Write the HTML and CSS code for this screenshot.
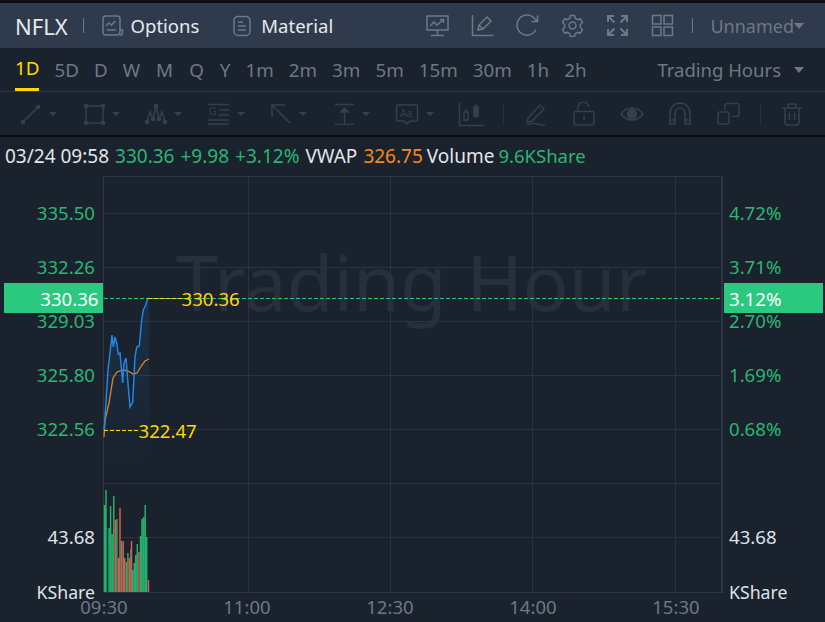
FILE: index.html
```html
<!DOCTYPE html>
<html>
<head>
    <title>NFLX</title>
    <link rel="stylesheet" href="styles.css">
</head>
<body>
    <div class="app">
        <div class="header">
            <span class="symbol">NFLX</span>
            <span class="sep"></span>
            <div class="nav-item nav-options">
                <svg class="icon" width="22" height="22" viewBox="0 0 22 22"><rect x="1" y="1" width="17" height="19" rx="3"/><path d="M4 11l3-3 2.500 2 4-4M5 15h9M18 15h2.500v3a2 2 0 0 1-2.500 2"/></svg>
                <span>Options</span>
            </div>
            <div class="nav-item nav-material">
                <svg class="icon" width="18" height="22" viewBox="0 0 18 22"><rect x="1" y="1.500" width="16" height="19" rx="4"/><path d="M5 7h5M5 11h8M5 15h8"/></svg>
                <span>Material</span>
            </div>
            <div class="header-right">
                <svg class="icon" width="23" height="23" viewBox="0 0 23 23"><rect x="1" y="2" width="21" height="14"/><path d="M4 12l4-4 3 3 6-5M14 5.500h3.500V9M11.500 16v5M5 21.500h13"/></svg>
                <svg class="icon" width="23" height="23" viewBox="0 0 23 23"><path d="M1.500 1v20.500H22.500M7 16l1-5 8-8 4 4-8 8zM8 11l4 4"/></svg>
                <svg class="icon" width="23" height="23" viewBox="0 0 23 23"><path d="M20 15.500A10 10 0 1 1 18.500 4.500L21 7M21.500 1.500V7.500H15.500"/></svg>
                <svg class="icon" width="23" height="23" viewBox="0 0 23 23"><circle cx="11.500" cy="11.500" r="3.500"/><path d="M9.500 1.500h4l.8 2.800 2.300 1.300 2.800-.7 2 3.600-2 2.100v2.800l2 2.100-2 3.600-2.800-.7-2.300 1.300-.8 2.800h-4l-.8-2.800-2.300-1.300-2.800.7-2-3.600 2-2.100V10.600l-2-2.100 2-3.600 2.800.7 2.300-1.300z"/></svg>
                <svg class="icon icon-bold" width="23" height="23" viewBox="0 0 23 23"><path d="M2 8V2h6M2 2l6.500 6.500M21 8V2h-6M21 2l-6.500 6.500M2 15v6h6M2 21l6.500-6.500M21 15v6h-6M21 21l-6.500-6.500"/></svg>
                <svg class="icon" width="23" height="23" viewBox="0 0 23 23"><rect x="1.500" y="1.500" width="8.500" height="8.500"/><rect x="13" y="1.500" width="8.500" height="8.500"/><rect x="1.500" y="13" width="8.500" height="8.500"/><rect x="13" y="13" width="8.500" height="8.500"/></svg>
                <span class="sep sep-right"></span>
                <span class="unnamed">Unnamed</span>
                <span class="caret caret-header"></span>
            </div>
        </div>

        <div class="tabs">
            <span class="tab active">1D</span>
            <span class="tab">5D</span>
            <span class="tab">D</span>
            <span class="tab tab-wide">W</span>
            <span class="tab tab-wide">M</span>
            <span class="tab tab-wide">Q</span>
            <span class="tab">Y</span>
            <span class="tab">1m</span>
            <span class="tab">2m</span>
            <span class="tab">3m</span>
            <span class="tab">5m</span>
            <span class="tab">15m</span>
            <span class="tab">30m</span>
            <span class="tab">1h</span>
            <span class="tab">2h</span>
            <div class="hours">
                <span>Trading Hours</span>
                <span class="caret"></span>
            </div>
        </div>

        <div class="toolbar">
            <div class="tool tool-caret">
                <svg class="icon" width="22" height="22" viewBox="0 0 22 22"><path d="M3 19L18 4"/><circle class="dot" cx="3" cy="19" r="1.500"/><circle class="dot" cx="18" cy="4" r="1.500"/></svg>
                <span class="caret"></span>
            </div>
            <div class="tool tool-caret">
                <svg class="icon" width="22" height="22" viewBox="0 0 22 22"><rect x="3" y="3" width="17" height="17"/><circle class="dot" cx="3" cy="3" r="1.500"/><circle class="dot" cx="20" cy="3" r="1.500"/><circle class="dot" cx="3" cy="20" r="1.500"/><circle class="dot" cx="20" cy="20" r="1.500"/></svg>
                <span class="caret"></span>
            </div>
            <div class="tool tool-caret">
                <svg class="icon" width="22" height="22" viewBox="0 0 22 22"><path d="M2 19L5 9l3 7 3-13 3 13 3-7 3 10"/><circle class="dot" cx="2" cy="19" r="1.500"/><circle class="dot" cx="8" cy="16" r="1.500"/><circle class="dot" cx="11" cy="3" r="1.500"/><circle class="dot" cx="14" cy="16" r="1.500"/><circle class="dot" cx="20" cy="19" r="1.500"/></svg>
                <span class="caret"></span>
            </div>
            <div class="tool tool-caret">
                <svg class="icon" width="22" height="22" viewBox="0 0 22 22"><path d="M0 1.500h21M11 7h10M11 12h10M0 17h21M0 21h21"/><text class="tool-letter" x="1" y="12">G</text></svg>
                <span class="caret"></span>
            </div>
            <div class="tool tool-caret">
                <svg class="icon" width="22" height="22" viewBox="0 0 22 22"><path d="M2 14V2h13M2 2l18 18"/></svg>
                <span class="caret"></span>
            </div>
            <div class="tool tool-caret">
                <svg class="icon" width="22" height="22" viewBox="0 0 22 22"><path d="M2 1.500h19M2 21.500h19M11.500 8v13"/><path class="dot" d="M7.500 9l4-4 4 4z"/></svg>
                <span class="caret"></span>
            </div>
            <div class="tool tool-caret">
                <svg class="icon" width="24" height="22" viewBox="0 0 24 22"><path d="M3 2h18a1.500 1.500 0 0 1 1.500 1.500v13a1.500 1.500 0 0 1-1.500 1.500h-6l-3 3-3-3H3a1.500 1.500 0 0 1-1.500-1.500v-13A1.500 1.500 0 0 1 3 2z"/><text class="tool-letter" x="5" y="14">Aa</text></svg>
                <span class="caret"></span>
            </div>
            <div class="tool tool-candles">
                <svg class="icon" width="26" height="26" viewBox="0 0 26 26"><path d="M1.500 1v23.500H26M8 8v3M8 21v-3M18 3v3M18 17v-3"/><rect x="6" y="11" width="4" height="8"/><rect class="dot" x="16" y="6" width="4" height="9"/></svg>
            </div>
            <span class="tool-sep tool-sep-a"></span>
            <div class="tool tool-draw">
                <svg class="icon" width="22" height="24" viewBox="0 0 22 24"><path d="M3 16L15 3l4 4L7 19l-5 1zM2 23c4-3 7-2 10-1s5 1 8 1"/></svg>
            </div>
            <div class="tool tool-lock">
                <svg class="icon" width="22" height="24" viewBox="0 0 22 24"><rect x="1" y="9.500" width="20" height="13.500" rx="2"/><path d="M5 9.500V6a5.500 5.500 0 0 1 11-1M11 14v4"/></svg>
            </div>
            <div class="tool tool-eye">
                <svg class="icon" width="24" height="22" viewBox="0 0 24 22"><path d="M1 11c6-8 16-8 22 0-6 8-16 8-22 0z"/><circle class="dot" cx="12" cy="11" r="4.500"/></svg>
            </div>
            <div class="tool tool-magnet">
                <svg class="icon" width="22" height="24" viewBox="0 0 22 24"><path d="M1 22V11a10 10 0 0 1 20 0v11h-5V11a5 5 0 0 0-10 0v11zM1 18h5M16 18h5"/></svg>
            </div>
            <div class="tool tool-copy">
                <svg class="icon" width="24" height="24" viewBox="0 0 24 24"><path d="M9 8V3a1.500 1.500 0 0 1 1.500-1.500h11A1.500 1.500 0 0 1 23 3v10a1.500 1.500 0 0 1-1.500 1.500H16"/><rect x="2" y="10" width="11" height="12" rx="2"/></svg>
            </div>
            <span class="tool-sep tool-sep-b"></span>
            <div class="tool">
                <svg class="icon" width="22" height="24" viewBox="0 0 22 24"><path d="M1 6h20M7 6V2h8v4M4 6v14a3 3 0 0 0 3 3h8a3 3 0 0 0 3-3V6M8.500 11v7M13.500 11v7"/></svg>
            </div>
        </div>

        <div class="info">
            <span>03/24 09:58</span>
            <span class="up">330.36</span>
            <span class="up">+9.98</span>
            <span class="up">+3.12%</span>
            <span>VWAP</span>
            <span class="avg">326.75</span>
            <span class="info-volume">Volume</span>
            <span class="up info-total">9.6KShare</span>
        </div>

        <svg class="chart" width="825" height="446" viewBox="0 176 825 446">
            <defs>
                <linearGradient id="area" x1="0" y1="0" x2="0" y2="1">
                    <stop offset="0" stop-color="#1d6fb8" stop-opacity="0.2"/>
                    <stop offset="1" stop-color="#1d6fb8" stop-opacity="0"/>
                </linearGradient>
            </defs>

            <text class="watermark" x="411.500" y="311">Trading Hour</text>

            <path class="grid" d="M103 213.500H722M103 267.500H722M103 321.500H722M103 375.500H722M103 429.500H722M103 483.500H722M103 537.500H722"/>
            <path class="grid" d="M248.500 176V592M390.500 176V592M532.500 176V592M675.500 176V592"/>
            <path class="frame" d="M103.500 176.500H722M103.500 176V592M103 592.500H722"/>
            <path class="frame-right" d="M722 176V593"/>

            <path class="area" fill="url(#area)" d="M104 430L105 417 108 370 110 353 112 335 113.300 347 115 337 116.700 343 118.300 354 120 353 122.700 383 124 363 126 358 128.300 387 130 407 132.700 402 135 357 136.700 347 139.300 346 141.700 320 143.300 310 145.700 305 147.700 298.500 149 298.500V465H104Z"/>

            <g class="vol-up">
                <path d="M104.500 592V505M106 592V490M109 592V528M110.600 592V506M112.200 592V534M113.800 592V496M116.900 592V519M121.600 592V541M126.300 592V562M127.900 592V553M131 592V549M132.600 592V570M134.200 592V563M135.700 592V555M137.300 592V544M140.500 592V536M142 592V519M143.600 592V517M145.200 592V505M146.700 592V537"/>
            </g>
            <g class="vol-down">
                <path d="M115.300 592V520M118.500 592V558M120 592V508M123.200 592V541M124.700 592V558M129.500 592V558M131.500 592V541M139 592V552M148.500 592V580"/>
            </g>

            <polyline class="line-avg" points="104,437 105,420 109,403 113,378 117,372 123,370 128,371 133,374 137,373 142,365 145,361 149,359"/>
            <polyline class="line-price" points="104,430 105,417 108,370 110,353 112,335 113.300,347 115,337 116.700,343 118.300,354 120,353 122.700,383 124,363 126,358 128.300,387 130,407 132.700,402 135,357 136.700,347 139.300,346 141.700,320 143.300,310 145.700,305 147.700,298.500 149,298.500"/>

            <path class="last-line" d="M104 298.500H722"/>
            <path class="mark-line" d="M148 298.500H182M104 430.500H138"/>
            <text class="mark" x="181.500" y="306">330.36</text>
            <text class="mark" x="138.500" y="438">322.47</text>

            <text class="axis up-text end" x="95" y="220">335.50</text>
            <text class="axis up-text end" x="95" y="274">332.26</text>
            <text class="axis up-text end" x="95" y="328">329.03</text>
            <text class="axis up-text end" x="95" y="382">325.80</text>
            <text class="axis up-text end" x="95" y="436">322.56</text>
            <text class="axis light end" x="95" y="544">43.68</text>
            <text class="axis light unit end" x="95" y="599">KShare</text>

            <text class="axis up-text" x="729" y="220">4.72%</text>
            <text class="axis up-text" x="729" y="274">3.71%</text>
            <text class="axis up-text" x="729" y="328">2.70%</text>
            <text class="axis up-text" x="729" y="382">1.69%</text>
            <text class="axis up-text" x="729" y="436">0.68%</text>
            <text class="axis light" x="729" y="544">43.68</text>
            <text class="axis light unit" x="729" y="599">KShare</text>

            <rect class="last-box" x="4" y="283" width="99" height="30"/>
            <rect class="last-box" x="724" y="283" width="99" height="30"/>
            <text class="axis white end" x="98.500" y="306">330.36</text>
            <text class="axis white" x="729" y="306">3.12%</text>

            <text class="axis time mid" x="104" y="614">09:30</text>
            <text class="axis time mid" x="247" y="614">11:00</text>
            <text class="axis time mid" x="390" y="614">12:30</text>
            <text class="axis time mid" x="533" y="614">14:00</text>
            <text class="axis time mid" x="676" y="614">15:30</text>
        </svg>
    </div>
</body>
</html>
```

FILE: styles.css
```css
body {
    margin: 0;
    background-color: #1a222d;
    font-family: "Noto Sans", "Open Sans", sans-serif;
}

.app {
    width: 825px;
    height: 622px;
    overflow: hidden;
    border-top: 3px solid #0c0e12;
    box-sizing: border-box;
}

.icon {
    fill: none;
    stroke: #6d7887;
    stroke-width: 1.5;
    flex-shrink: 0;
}

.icon-bold {
    stroke-width: 2;
}

.header {
    height: 45px;
    background-color: #2f3b4c;
    display: flex;
    align-items: center;
    padding-left: 15px;
    color: #e6e9ee;
}

.symbol {
    font-size: 22px;
}

.sep {
    width: 1px;
    height: 15px;
    background-color: #6d7887;
    margin: 0 18px 0 15px;
}

.nav-item {
    display: flex;
    align-items: center;
    font-size: 18.500px;
}

.nav-options {
    gap: 7px;
}

.nav-material {
    gap: 10px;
    margin-left: 34px;
}

.header-right {
    margin-left: auto;
    display: flex;
    align-items: center;
    gap: 22px;
    padding-right: 21px;
}

.sep-right {
    margin: 0 -5px 0 -4px;
}

.unnamed {
    color: #6d7887;
    font-size: 18px;
}

.caret {
    width: 0;
    height: 0;
    border-left: 5px solid transparent;
    border-right: 5px solid transparent;
    border-top: 6px solid #6d7887;
}

.caret-header {
    margin-left: -22px;
}

.tabs {
    height: 43px;
    border-bottom: 1px solid #2f3945;
    display: flex;
    align-items: center;
    gap: 15px;
    padding-left: 15px;
    padding-right: 21px;
    font-size: 18.800px;
    color: #6d7887;
}

.tab-wide {
    margin-right: 1px;
}

.tab.active {
    color: #ffd800;
    height: 43px;
    line-height: 41px;
    box-sizing: border-box;
    border-bottom: 3px solid #ffd800;
}

.hours {
    margin-left: auto;
    display: flex;
    align-items: center;
    gap: 13px;
    font-size: 18.500px;
}

.toolbar {
    height: 43px;
    border-bottom: 2px solid #0c0e12;
    display: flex;
    align-items: center;
    padding-left: 20px;
}

.toolbar .icon {
    stroke: #363f4c;
}

.toolbar .caret {
    border-top-color: #363f4c;
    border-left-width: 4px;
    border-right-width: 4px;
    border-top-width: 4px;
}

.dot {
    fill: #363f4c;
}

.tool-letter {
    fill: #363f4c;
    stroke: none;
    font-size: 10px;
    font-family: "Liberation Sans", sans-serif;
}

.tool {
    display: flex;
    align-items: center;
}

.tool-caret {
    width: 62.500px;
    gap: 7px;
}

.tool-candles {
    width: 45.500px;
}

.tool-sep {
    width: 1px;
    height: 22px;
    background-color: #252e3a;
}

.tool-sep-a {
    margin-right: 21px;
}

.tool-sep-b {
    margin-right: 20px;
}

.tool-draw {
    margin-right: 26px;
}

.tool-lock,
.tool-eye,
.tool-magnet {
    margin-right: 25px;
}

.tool-copy {
    margin-right: 20px;
}

.info {
    height: 39px;
    box-sizing: border-box;
    padding-bottom: 2px;
    display: flex;
    align-items: center;
    gap: 6px;
    padding-left: 5px;
    font-size: 19px;
    color: #e2e5e9;
}

.info-volume {
    margin-left: -2px;
}

.info-total {
    margin-left: -2px;
    font-size: 18.500px;
}

.up {
    color: #2bb673;
}

.avg {
    color: #f58a1f;
}

.chart {
    display: block;
}

.watermark {
    font-size: 76px;
    fill: #262f3b;
    text-anchor: middle;
}

.grid {
    fill: none;
    stroke: #2a333f;
    stroke-width: 1;
}

.frame {
    fill: none;
    stroke: #2c3644;
    stroke-width: 1;
}

.frame-right {
    stroke: #2c3644;
    stroke-width: 2;
}

.vol-up path {
    stroke: #22b06c;
    stroke-width: 1.500;
    fill: none;
}

.vol-down path {
    stroke: #e5544f;
    stroke-width: 1.500;
    fill: none;
}

.line-price {
    fill: none;
    stroke: #2285e0;
    stroke-width: 1.500;
}

.line-avg {
    fill: none;
    stroke: #e0822a;
    stroke-width: 1.300;
}

.last-line {
    stroke: #2ac97f;
    stroke-width: 1;
    stroke-dasharray: 4 2;
}

.mark-line {
    stroke: #ffd800;
    stroke-width: 1;
    stroke-dasharray: 4 2;
}

.mark {
    fill: #ffd800;
    font-size: 18.600px;
}

.axis {
    font-size: 18.600px;
}

.axis.unit {
    font-size: 17.700px;
}

.end {
    text-anchor: end;
}

.mid {
    text-anchor: middle;
}

.up-text {
    fill: #2bb673;
}

.light {
    fill: #dfe3e8;
}

.white {
    fill: #ffffff;
}

.time {
    fill: #6d7887;
}

.last-box {
    fill: #2ac97f;
}
```
